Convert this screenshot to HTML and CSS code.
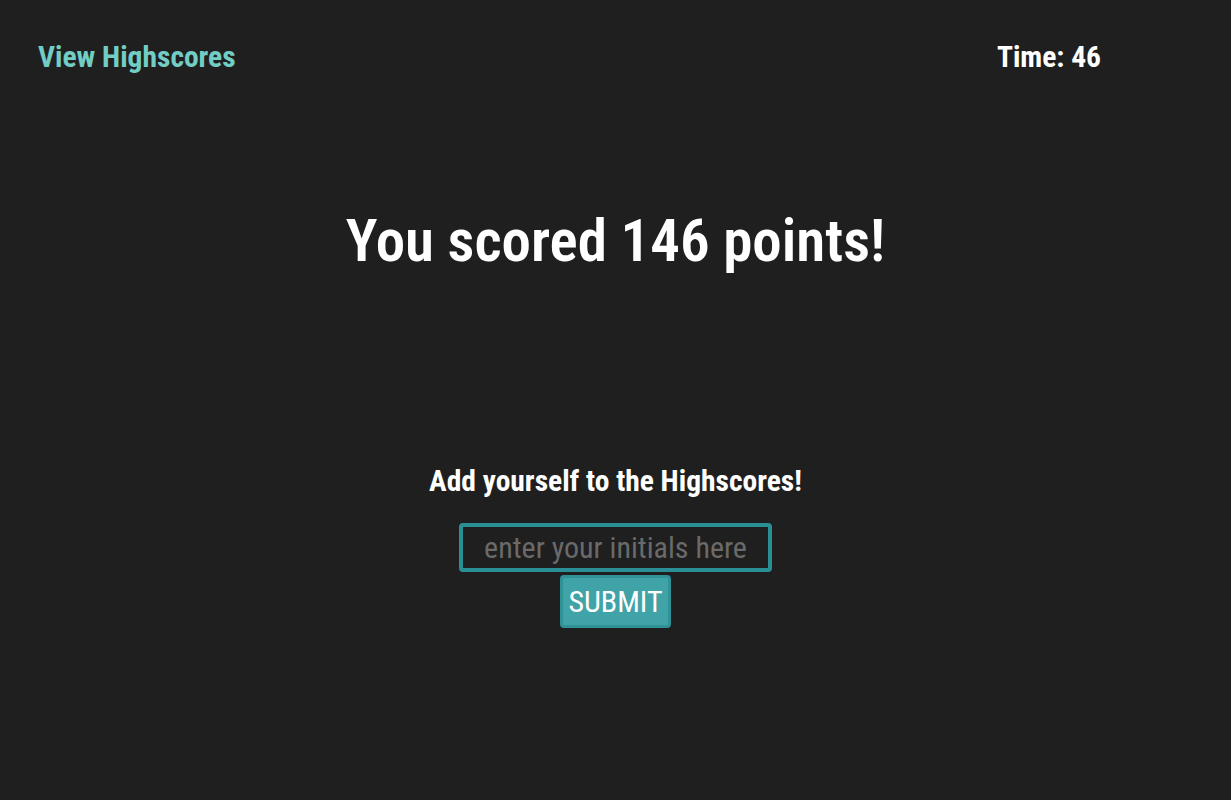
FILE: index.html
```html
<!DOCTYPE html>
<html>
<head>
<meta charset="utf-8">
<link rel="stylesheet" href="styles.css">
</head>
<body>
<header class="top">
  <a class="hs-link" href="#">View Highscores</a>
  <div class="timer">Time: 46</div>
</header>
<main class="main">
  <h1 class="score">You scored 146 points!</h1>
  <section class="entry">
    <h2 class="entry-title">Add yourself to the Highscores!</h2>
    <form class="entry-form">
      <input class="initials" type="text" placeholder="enter your initials here">
      <button class="submit" type="button">SUBMIT</button>
    </form>
  </section>
</main>
</body>
</html>
```
FILE: styles.css
```css
html, body {
  margin: 0;
  padding: 0;
  background: #1f1f1f;
  height: 100%;
}
body {
  font-family: "Roboto Condensed", Roboto, "Liberation Sans", sans-serif;
  font-stretch: condensed;
  color: #ffffff;
}
.top {
  display: flex;
  justify-content: space-between;
  align-items: center;
  padding: 37px 130px 0 38px;
  height: 40px;
}
.hs-link {
  color: #72cdc4;
  text-decoration: none;
  font-weight: 700;
  font-size: 29.5px;
}
.timer {
  font-weight: 700;
  font-size: 29.5px;
}
.main {
  display: flex;
  flex-direction: column;
  align-items: center;
}
.score {
  margin: 128px 0 0;
  font-size: 59px;
  font-weight: 600;
  line-height: 72.6px;
}
.entry {
  margin-top: 186px;
  display: flex;
  flex-direction: column;
  align-items: center;
}
.entry-title {
  margin: 0;
  font-size: 29.5px;
  font-weight: 700;
  line-height: 34.6px;
}
.entry-form {
  margin-top: 25px;
  display: flex;
  flex-direction: column;
  align-items: center;
}
.initials {
  box-sizing: border-box;
  width: 313px;
  height: 49px;
  border: 4px solid #2a9096;
  border-radius: 4px;
  background: #1f1f1f;
  color: #ffffff;
  font-family: inherit;
  font-stretch: condensed;
  font-size: 30px;
  text-align: center;
  padding: 0;
  outline: none;
}
.initials::placeholder {
  color: #6a6a6a;
}
.submit {
  margin-top: 3px;
  width: 111px;
  height: 53px;
  box-sizing: border-box;
  background: #3fa3a8;
  border: 3px solid #2e9297;
  border-radius: 4px;
  color: #ffffff;
  font-family: inherit;
  font-stretch: condensed;
  font-size: 30px;
  padding: 0;
}
```
